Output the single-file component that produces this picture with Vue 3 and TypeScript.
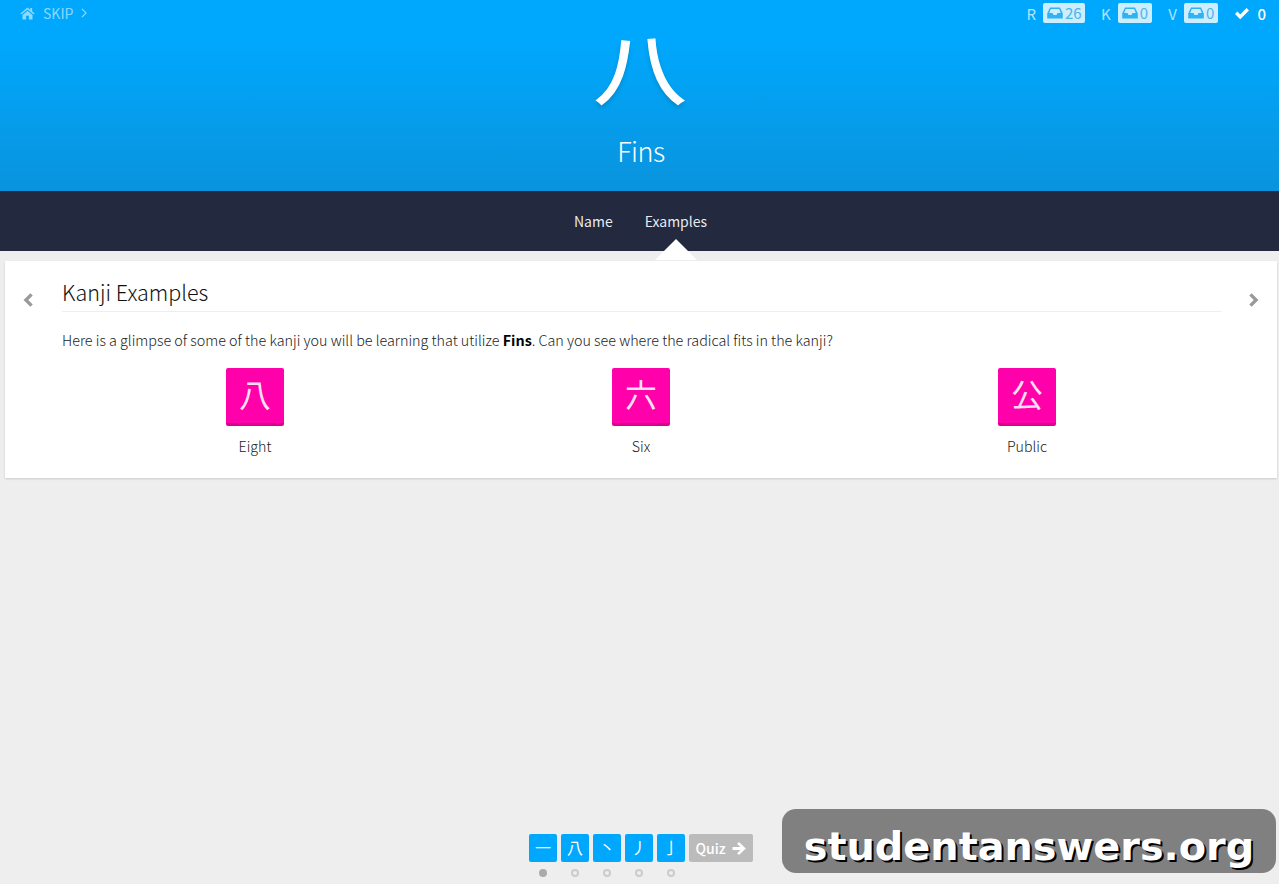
<script setup lang="ts">
interface Stat { label: string; count: string }
interface Example { kanji: string; name: string }
const stats: Stat[] = [
  { label: 'R', count: '26' },
  { label: 'K', count: '0' },
  { label: 'V', count: '0' },
]
const examples: Example[] = [
  { kanji: '八', name: 'Eight' },
  { kanji: '六', name: 'Six' },
  { kanji: '公', name: 'Public' },
]
const steps: string[] = ['一', '八', '丶', '丿', '亅']
</script>

<template>
  <div class="page">
    <header class="hero">
      <div class="topbar">
        <div class="skip">
          <svg class="home" viewBox="0 0 16 14" width="15" height="13"><path d="M8 0.5 L0.3 7 L1.4 8.2 L8 2.8 L14.6 8.2 L15.7 7 L13 4.7 V1 H11 V3 Z M8 4 L2.6 8.5 V13.5 H6.5 V9.5 H9.5 V13.5 H13.4 V8.5 Z" fill="currentColor"/></svg>
          <span>SKIP</span>
          <svg viewBox="0 0 7 12" width="6" height="10"><path d="M1 1 L6 6 L1 11" fill="none" stroke="currentColor" stroke-width="1.4"/></svg>
        </div>
        <div class="stats">
          <div v-for="s in stats" :key="s.label" class="stat">
            <span class="stat-label">{{ s.label }}</span>
            <span class="badge">
              <svg viewBox="0 0 16 12" width="16" height="12"><path d="M3 0.5 H13 L15.8 6.5 V11.5 H0.2 V6.5 Z M3.8 2 L2.2 6 H5.5 L6.5 8 H9.5 L10.5 6 H13.8 L12.2 2 Z" fill="#2eb2f4" fill-rule="evenodd"/></svg>
              <span>{{ s.count }}</span>
            </span>
          </div>
          <div class="done">
            <svg viewBox="0 0 16 13" width="16" height="13"><path d="M1 7 L3.4 4.6 L6.2 7.4 L12.6 1 L15 3.4 L6.2 12.2 Z" fill="#fff"/></svg>
            <span>0</span>
          </div>
        </div>
      </div>
      <div class="glyph" lang="zh-CN">八</div>
      <div class="meaning">Fins</div>
    </header>

    <nav class="tabs">
      <span class="tab">Name</span>
      <span class="tab active">Examples</span>
    </nav>

    <section class="card">
      <div class="chev">
        <svg viewBox="0 0 12 16" width="11" height="14"><path d="M9.5 1.5 L3 8 L9.5 14.5" fill="none" stroke="#999" stroke-width="3.8"/></svg>
      </div>
      <div class="content">
        <h2 class="title">Kanji Examples</h2>
        <p class="lead">Here is a glimpse of some of the kanji you will be learning that utilize <b>Fins</b>. Can you see where the radical fits in the kanji?</p>
        <div class="examples">
          <div v-for="e in examples" :key="e.name" class="example">
            <div class="tile">{{ e.kanji }}</div>
            <div class="tile-name">{{ e.name }}</div>
          </div>
        </div>
      </div>
      <div class="chev">
        <svg viewBox="0 0 12 16" width="11" height="14"><path d="M2.5 1.5 L9 8 L2.5 14.5" fill="none" stroke="#999" stroke-width="3.8"/></svg>
      </div>
    </section>

    <footer class="steps">
      <div class="step-row">
        <div v-for="(s, i) in steps" :key="i" class="step">{{ s }}</div>
        <div class="quiz">
          <span>Quiz</span>
          <svg viewBox="0 0 16 14" width="15" height="13"><path d="M0.5 5.4 H9 L5.5 2 L7.4 0 L14.8 7 L7.4 14 L5.5 12 L9 8.6 H0.5 Z" fill="#fff"/></svg>
        </div>
      </div>
      <div class="dot-row">
        <span v-for="(s, i) in steps" :key="i" class="dot" :class="{ current: i === 0 }"></span>
      </div>
    </footer>

    <div class="watermark">studentanswers.org</div>
  </div>
</template>

<style>
body { background: #eeeeee; }
</style>

<style scoped>
.page {
  position: relative;
  height: 884px;
  overflow: hidden;
  display: flex;
  flex-direction: column;
  background: #eeeeee;
  font-family: "Noto Sans CJK JP", "Noto Sans", sans-serif;
  color: #222;
}
.hero {
  height: 191px;
  background: linear-gradient(#00a8fd 0, #00a8fd 40px, #0a93dd 100%);
  color: #fff;
  display: flex;
  flex-direction: column;
  align-items: center;
}
.topbar {
  align-self: stretch;
  height: 26px;
  display: flex;
  justify-content: space-between;
  align-items: center;
  padding: 0 13px 0 20px;
}
.skip {
  display: flex;
  align-items: center;
  gap: 8px;
  color: rgba(255, 255, 255, 0.55);
  font-size: 14px;
}
.stats { display: flex; align-items: center; gap: 16.5px; font-size: 15px; }
.stat { display: flex; align-items: center; gap: 7px; color: rgba(255, 255, 255, 0.7); }
.badge {
  display: flex;
  align-items: center;
  gap: 2px;
  height: 20px;
  min-width: 34px;
  box-sizing: border-box;
  padding: 0 3px 0 4px;
  background: rgba(255, 255, 255, 0.8);
  border-radius: 2px;
  color: #4cb4ea;
  line-height: 20px;
}
.done { display: flex; align-items: center; gap: 7px; font-weight: 500; }
.glyph {
  font-family: "Noto Sans CJK SC", sans-serif;
  height: 90px;
  font-size: 93px;
  line-height: 90px;
  transform: scale(1, 0.84);
  transform-origin: 50% 12px;
  -webkit-text-stroke: 1.2px #fff;
  padding-left: 1px;
  text-shadow: 0 3px 6px rgba(0, 0, 0, 0.18);
}
.meaning {
  margin-top: 16px;
  padding-left: 3px;
  font-size: 27px;
  line-height: 38px;
  font-weight: 300;
  letter-spacing: -0.5px;
}
.tabs {
  height: 60px;
  flex: none;
  background: #232a3f;
  display: flex;
  justify-content: center;
  align-items: center;
  gap: 32px;
  padding-left: 2px;
  box-sizing: border-box;
  color: rgba(255, 255, 255, 0.92);
  font-size: 14px;
  position: relative;
}
.tab { position: relative; }
.tab.active::after {
  content: "";
  position: absolute;
  left: 50%;
  top: 28px;
  margin-left: -21px;
  border-left: 21px solid transparent;
  border-right: 21px solid transparent;
  border-bottom: 21px solid #fff;
}
.card {
  margin: 10px 2px 0 5px;
  height: 217px;
  flex: none;
  background: #fff;
  box-shadow: 0 1px 2px rgba(0, 0, 0, 0.15);
  display: flex;
}
.chev {
  flex: none;
  width: 57px;
  padding-top: 32px;
  display: flex;
  justify-content: flex-start;
  padding-left: 18px;
  box-sizing: border-box;
}
.chev:last-child { width: 56px; padding-left: 27px; }
.content { flex: 1; min-width: 0; }
.title {
  margin: 0;
  padding-top: 14px;
  height: 51px;
  box-sizing: border-box;
  border-bottom: 1px solid #eee;
  font-size: 21.5px;
  line-height: 34px;
  font-weight: 300;
  color: #111;
}
.lead {
  margin: 17px 0 0;
  font-size: 14.33px;
  line-height: 22px;
  font-weight: 300;
  color: #222;
}
.lead b { font-weight: 700; color: #000; }
.examples { display: grid; grid-template-columns: repeat(3, 386px); margin-top: 17px; }
.example { display: flex; flex-direction: column; align-items: center; }
.tile {
  width: 58px;
  height: 58px;
  box-sizing: border-box;
  background: #ff00aa;
  border-bottom: 3px solid #d9008f;
  border-radius: 2px;
  color: rgba(255, 255, 255, 0.88);
  font-size: 32px;
  line-height: 50px;
  text-align: center;
}
.tile-name { margin-top: 9px; font-size: 14.2px; line-height: 22px; font-weight: 300; color: #222; }
.steps {
  margin-top: auto;
  padding-bottom: 7px;
  display: flex;
  flex-direction: column;
  padding-left: 529px;
}
.step-row { display: flex; gap: 4px; }
.step {
  width: 28px;
  height: 28px;
  background: #00a8fd;
  border-radius: 2px;
  color: #fff;
  font-size: 16px;
  line-height: 26px;
  text-align: center;
}
.quiz {
  width: 64px;
  height: 28px;
  box-sizing: border-box;
  background: #bbbbbb;
  border-radius: 2px;
  color: #fff;
  font-size: 14px;
  font-weight: 500;
  display: flex;
  align-items: center;
  justify-content: center;
  gap: 6px;
}
.dot-row { display: flex; gap: 24px; margin-top: 7px; padding-left: 10px; }
.dot {
  width: 8px;
  height: 8px;
  box-sizing: border-box;
  border-radius: 50%;
  border: 2px solid #ccc;
}
.dot.current { background: #aaa; border-color: #aaa; }
.watermark {
  position: absolute;
  left: 782px;
  top: 809px;
  width: 494px;
  height: 64px;
  border-radius: 14px;
  background: #808080;
  color: #fff;
  font-family: "DejaVu Sans", sans-serif;
  font-weight: 700;
  font-size: 39.8px;
  line-height: 74px;
  text-align: center;
  text-shadow: 2px 2px 0 #000;
}
</style>
